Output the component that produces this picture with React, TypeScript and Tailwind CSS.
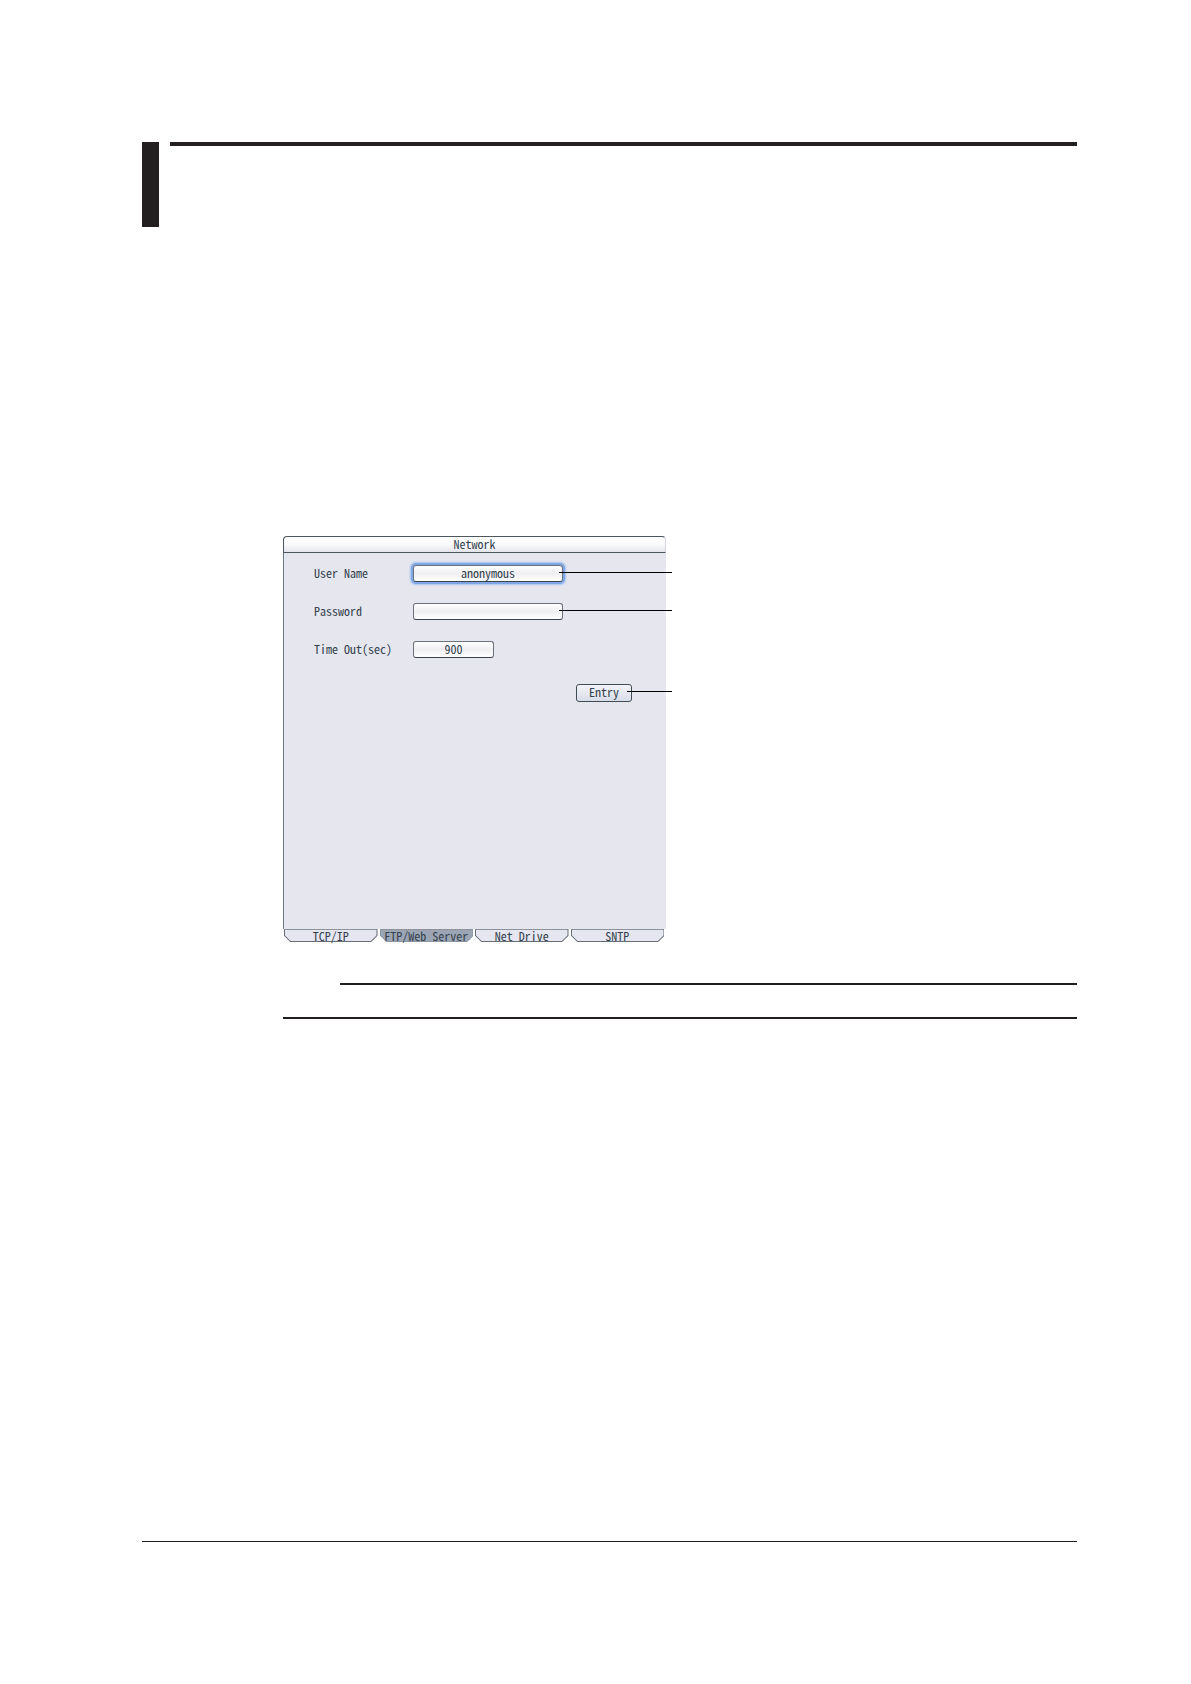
import { useState } from 'react';
import type { ReactNode } from 'react';
import { clsx } from 'clsx';

const TABS = ['TCP/IP', 'FTP/Web Server', 'Net Drive', 'SNTP'];

// Leader line that runs from a control to the outside of the dialog
function Leader({ className }: { className: string }) {
  return <span className={clsx('absolute top-[7px] h-px bg-black', className)} />;
}

function Field({ id, label, children }: { id: string; label: string; children: ReactNode }) {
  return (
    <div className="flex h-[17px] items-center">
      <label htmlFor={id} className="w-[99px] pb-[2px] whitespace-nowrap">
        {label}
      </label>
      <div className="relative">{children}</div>
    </div>
  );
}

const inputClass =
  'block h-[17px] rounded-[3px] border border-[#6c727a] border-b-[#3c454d] bg-linear-to-b from-white via-[#efeff2] to-white pb-[2px] text-center outline-none';

function Tab({ label, active, onClick }: { label: string; active: boolean; onClick: () => void }) {
  return (
    <button
      type="button"
      role="tab"
      aria-selected={active}
      onClick={onClick}
      className="relative h-[14px] flex-1 whitespace-nowrap text-center leading-[14px]"
    >
      <svg
        className="absolute inset-0 h-full w-full"
        viewBox="0 0 93 14"
        preserveAspectRatio="none"
        aria-hidden="true"
      >
        <path
          d="M0.5 0.5V6.5L6.5 12.5H86.5L92.5 6.5V0.5Z"
          fill={active ? '#9ba5b3' : '#e5e6ef'}
        />
        <path d="M0 0.5H93" stroke="#8d939b" />
        <path
          d="M0.5 0.5V6.5L6.5 12.5H86.5L92.5 6.5V0.5"
          fill="none"
          stroke={active ? '#8a95a3' : '#656d76'}
        />
      </svg>
      <span className="relative">{label}</span>
    </button>
  );
}

function NetworkDialog() {
  const [tab, setTab] = useState('FTP/Web Server');

  return (
    <section className="w-[383px] font-['Noto_Sans_Mono_CJK_JP','Noto_Sans_CJK_JP','Liberation_Mono',monospace] text-[12px] leading-[16px] text-[#34414d]">
      <h2 className="h-[17px] rounded-t-[4px] border border-[#4d565d] border-r-[#d5d7de] bg-linear-to-b from-white via-[#fafafc] to-[#e4e5ec] text-center leading-[13px]">
        Network
      </h2>

      <form
        className="h-[376px] border-l border-[#6f7780] bg-[#e5e6ee] pt-3 pl-[30px]"
        onSubmit={(e) => e.preventDefault()}
      >
        <div className="flex flex-col gap-[21px]">
          <Field id="user" label="User Name">
            <input
              id="user"
              defaultValue="anonymous"
              className={clsx(inputClass, 'w-[150px] shadow-[0_0_0_2px_#7fa6e6,0_0_2px_3px_#a9c3ef]')}
            />
            <Leader className="left-[146px] w-[113px]" />
          </Field>
          <Field id="password" label="Password">
            <input id="password" type="password" className={clsx(inputClass, 'w-[150px]')} />
            <Leader className="left-[146px] w-[113px]" />
          </Field>
          <Field id="timeout" label="Time Out(sec)">
            <input id="timeout" defaultValue="900" className={clsx(inputClass, 'w-[81px]')} />
          </Field>
        </div>

        <div className="mt-[26px] flex justify-end pr-[34px]">
          <div className="relative">
            <button
              type="submit"
              className="block h-[18px] w-14 rounded-[3px] border border-[#414b55] bg-linear-to-b from-[#f3f4f8] to-[#d9dde8] pb-[2px] leading-[14px]"
            >
              Entry
            </button>
            <Leader className="left-[51px] w-[45px]" />
          </div>
        </div>
      </form>

      <div role="tablist" className="flex gap-[2px] pr-[2px] pl-px">
        {TABS.map((label) => (
          <Tab key={label} label={label} active={label === tab} onClick={() => setTab(label)} />
        ))}
      </div>
    </section>
  );
}

export default function App() {
  return (
    <main className="flex min-h-screen flex-col bg-white pt-[142px] pr-[114px] pb-[142px] pl-[142px]">
      <header className="flex gap-[11px]">
        <div className="h-[85px] w-[17px] bg-[#231f20]" />
        <div className="h-1 flex-1 bg-[#231f20]" />
      </header>

      <div className="mt-[309px] pl-[141px]">
        <NetworkDialog />

        <aside className="mt-10 h-9 border-b-2 border-[#231f20] pl-[57px]">
          <div className="h-[2px] bg-[#231f20]" />
        </aside>
      </div>

      <footer className="mt-auto h-px bg-[#231f20]" />
    </main>
  );
}
